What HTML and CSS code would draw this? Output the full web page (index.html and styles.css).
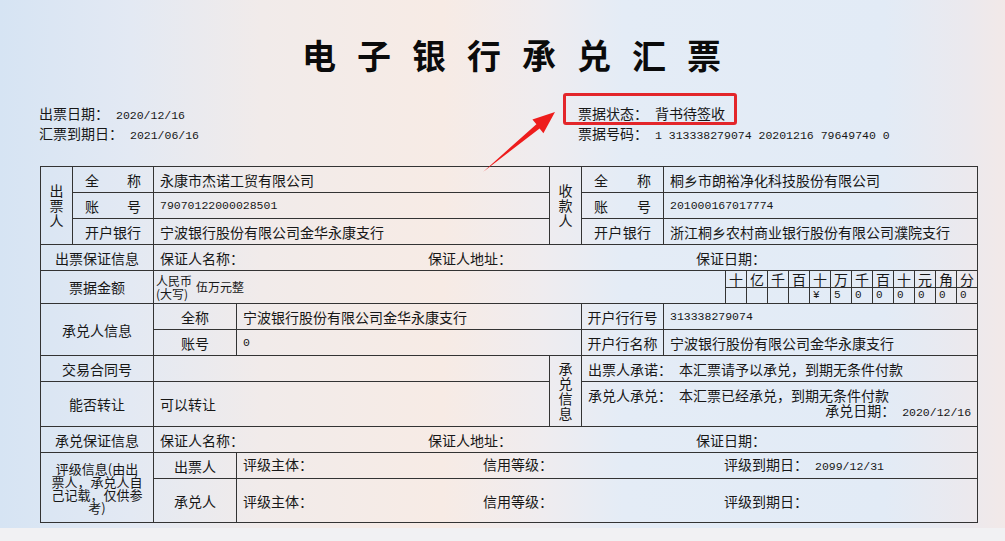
FILE: index.html
```html
<!DOCTYPE html>
<html lang="zh-CN">
<head>
<meta charset="utf-8">
<title>电子银行承兑汇票</title>
<link rel="stylesheet" href="styles.css">
</head>
<body>
<div class="page">
  <h1 class="title">电子银行承兑汇票</h1>
  <div class="meta">
    <div class="meta-left">
      <div class="meta-line">出票日期：<span class="num gap">2020/12/16</span></div>
      <div class="meta-line">汇票到期日：<span class="num gap">2021/06/16</span></div>
    </div>
    <div class="meta-right">
      <div class="meta-line status">票据状态：<span class="gap">背书待签收</span><span class="callout"></span></div>
      <div class="meta-line">票据号码：<span class="num gap">1 313338279074 20201216 79649740 0</span></div>
    </div>
  </div>
  <table class="bill">
    <colgroup>
      <col class="w32"><col class="w81"><col class="w83"><col class="w313"><col class="w32"><col class="w82"><col class="w62">
      <col class="dg"><col class="dg"><col class="dg"><col class="dg"><col class="dg"><col class="dg">
      <col class="dg"><col class="dg"><col class="dg"><col class="dg"><col class="dg"><col class="dg">
    </colgroup>
    <tr class="h26">
      <td rowspan="3" class="vert">出<br>票<br>人</td>
      <td class="lbl"><div class="just"><span>全</span><span>称</span></div></td>
      <td colspan="2" class="val">永康市杰诺工贸有限公司</td>
      <td rowspan="3" class="vert">收<br>款<br>人</td>
      <td class="lbl"><div class="just"><span>全</span><span>称</span></div></td>
      <td colspan="13" class="val">桐乡市朗裕净化科技股份有限公司</td>
    </tr>
    <tr class="h26">
      <td class="lbl"><div class="just"><span>账</span><span>号</span></div></td>
      <td colspan="2" class="val num">79070122000028501</td>
      <td class="lbl"><div class="just"><span>账</span><span>号</span></div></td>
      <td colspan="13" class="val num">201000167017774</td>
    </tr>
    <tr class="h26">
      <td class="lbl"><div class="just"><span>开</span><span>户</span><span>银</span><span>行</span></div></td>
      <td colspan="2" class="val">宁波银行股份有限公司金华永康支行</td>
      <td class="lbl"><div class="just"><span>开</span><span>户</span><span>银</span><span>行</span></div></td>
      <td colspan="13" class="val">浙江桐乡农村商业银行股份有限公司濮院支行</td>
    </tr>
    <tr class="h26">
      <td colspan="2" class="lbl c">出票保证信息</td>
      <td colspan="17" class="val">
        <div class="tri guar"><span>保证人名称：</span><span>保证人地址：</span><span>保证日期：</span></div>
      </td>
    </tr>
    <tr class="h17">
      <td colspan="2" rowspan="2" class="lbl c">票据金额</td>
      <td colspan="5" rowspan="2" class="amount">
        <div class="amount-in"><span class="rmb">人民币<br>(大写)</span><span class="words">伍万元整</span></div>
      </td>
      <td class="dh">十</td><td class="dh">亿</td><td class="dh">千</td><td class="dh">百</td>
      <td class="dh">十</td><td class="dh">万</td><td class="dh">千</td><td class="dh">百</td>
      <td class="dh">十</td><td class="dh">元</td><td class="dh">角</td><td class="dh">分</td>
    </tr>
    <tr class="h16">
      <td class="dv"></td><td class="dv"></td><td class="dv"></td><td class="dv"></td>
      <td class="dv">¥</td><td class="dv">5</td><td class="dv">0</td><td class="dv">0</td>
      <td class="dv">0</td><td class="dv">0</td><td class="dv">0</td><td class="dv">0</td>
    </tr>
    <tr class="h26">
      <td colspan="2" rowspan="2" class="lbl c">承兑人信息</td>
      <td class="lbl c">全称</td>
      <td colspan="2" class="val">宁波银行股份有限公司金华永康支行</td>
      <td class="lbl c">开户行行号</td>
      <td colspan="13" class="val num">313338279074</td>
    </tr>
    <tr class="h26">
      <td class="lbl c">账号</td>
      <td colspan="2" class="val num">0</td>
      <td class="lbl c">开户行名称</td>
      <td colspan="13" class="val">宁波银行股份有限公司金华永康支行</td>
    </tr>
    <tr class="h26">
      <td colspan="2" class="lbl c">交易合同号</td>
      <td colspan="2" class="val"></td>
      <td rowspan="2" class="vert">承<br>兑<br>信<br>息</td>
      <td colspan="14" class="val">出票人承诺：<span class="gap">本汇票请予以承兑，到期无条件付款</span></td>
    </tr>
    <tr class="h45">
      <td colspan="2" class="lbl c">能否转让</td>
      <td colspan="2" class="val">可以转让</td>
      <td colspan="14" class="val accept">
        <div>承兑人承兑：<span class="gap">本汇票已经承兑，到期无条件付款</span></div>
        <div class="right">承兑日期：<span class="num gap">2020/12/16</span></div>
      </td>
    </tr>
    <tr class="h26">
      <td colspan="2" class="lbl c">承兑保证信息</td>
      <td colspan="17" class="val">
        <div class="tri guar"><span>保证人名称：</span><span>保证人地址：</span><span>保证日期：</span></div>
      </td>
    </tr>
    <tr class="h26">
      <td colspan="2" rowspan="2" class="lbl c rating">评级信息(由出<br>票人，承兑人自<br>己记载，仅供参<br>考)</td>
      <td class="lbl c">出票人</td>
      <td colspan="16" class="val">
        <div class="tri rate"><span>评级主体：</span><span>信用等级：</span><span>评级到期日：<span class="num gap">2099/12/31</span></span></div>
      </td>
    </tr>
    <tr class="h44">
      <td class="lbl c">承兑人</td>
      <td colspan="16" class="val">
        <div class="tri rate"><span>评级主体：</span><span>信用等级：</span><span>评级到期日：</span></div>
      </td>
    </tr>
  </table>
  <svg class="arrow" width="1005" height="541" viewBox="0 0 1005 541" aria-hidden="true">
    <polygon points="483,172 539.6,128.6 543.4,133.2 555,112 532.4,119.6 536.4,124.2" fill="#ee1c1c"/>
  </svg>
</div>
</body>
</html>
```
FILE: styles.css
```css
* { box-sizing: border-box; }
html, body { margin: 0; padding: 0; }
body {
  width: 1005px;
  height: 541px;
  overflow: hidden;
  font-family: "Noto Sans CJK SC", "Noto Sans", sans-serif;
  color: #171717;
  background:
    linear-gradient(to bottom, rgba(241,241,243,0) 528px, #f1f1f3 528px),
    linear-gradient(90deg, #d6e4f3 0%, #e3e9f3 13%, #f1ebea 26%, #f7ebe5 44%, #efecef 54%, #e4ecf6 62%, #e2ebf6 88%, #ebe9ee 96%, #f2e9e8 100%);
}
.page {
  position: relative;
  width: 1005px;
  height: 541px;
  padding: 35px 0 0 39px;
}
.title {
  margin: 0;
  text-align: center;
  font-size: 34px;
  line-height: 40px;
  font-weight: 700;
  letter-spacing: 21px;
  color: #0b0b0b;
}
.meta {
  display: flex;
  margin-top: 28px;
  font-size: 14px;
  line-height: 20px;
}
.meta-left { width: 539px; }
.meta-line { height: 20px; white-space: nowrap; }
.num {
  font-family: "Liberation Mono", "DejaVu Sans Mono", monospace;
  font-size: 11.5px;
}
.gap { margin-left: 7px; }
.status { position: relative; }
.callout {
  position: absolute;
  left: -15px;
  top: -10px;
  width: 174px;
  height: 32px;
  border: 3px solid #e3262b;
  border-radius: 3px;
}

.bill {
  border-collapse: collapse;
  table-layout: fixed;
  width: 938px;
  margin: 23px 0 0 1px;
  font-size: 14px;
  line-height: 16px;
}
.bill td {
  border: 1px solid #333;
  padding: 0;
  white-space: nowrap;
  vertical-align: middle;
  overflow: hidden;
}
.w32 { width: 32px; }
.w81 { width: 81px; }
.w83 { width: 83px; }
.w313 { width: 313px; }
.w82 { width: 82px; }
.w62 { width: 62px; }
.dg { width: 21px; }

.h26 { height: 26px; }
.h17 { height: 17px; }
.h16 { height: 16px; }
.h45 { height: 45px; }
.h44 { height: 44px; }

.bill td.vert { text-align: center; line-height: 15px; }
.bill td.lbl { padding: 0 12px; }
.bill td.lbl.c { padding: 0 2px; text-align: center; }
.just { display: flex; justify-content: space-between; }
.bill td.val { padding: 0 6px; }
.bill td.val.num { font-size: 11.5px; }

.tri { display: grid; }
.tri.guar { grid-template-columns: 268px 268px auto; }
.tri.rate { grid-template-columns: 240px 241px auto; }

.bill td.amount { padding: 0 2px; }
.amount-in { display: flex; align-items: center; font-size: 12px; }
.rmb { line-height: 13px; }
.words { margin-left: 4px; line-height: 14px; }

.bill td.dh {
  text-align: center;
  font-size: 14px;
  line-height: 14px;
  overflow: visible;
}
.bill td.dv {
  padding-left: 3px;
  font-family: "Liberation Mono", "DejaVu Sans Mono", monospace;
  font-size: 11px;
  line-height: 13px;
  overflow: visible;
}

.accept { line-height: 15px; }
.right { text-align: right; }
.bill td.rating {
  font-size: 13px;
  line-height: 13px;
  padding: 0;
  overflow: visible;
}

.arrow {
  position: absolute;
  left: 0;
  top: 0;
  pointer-events: none;
}
```
